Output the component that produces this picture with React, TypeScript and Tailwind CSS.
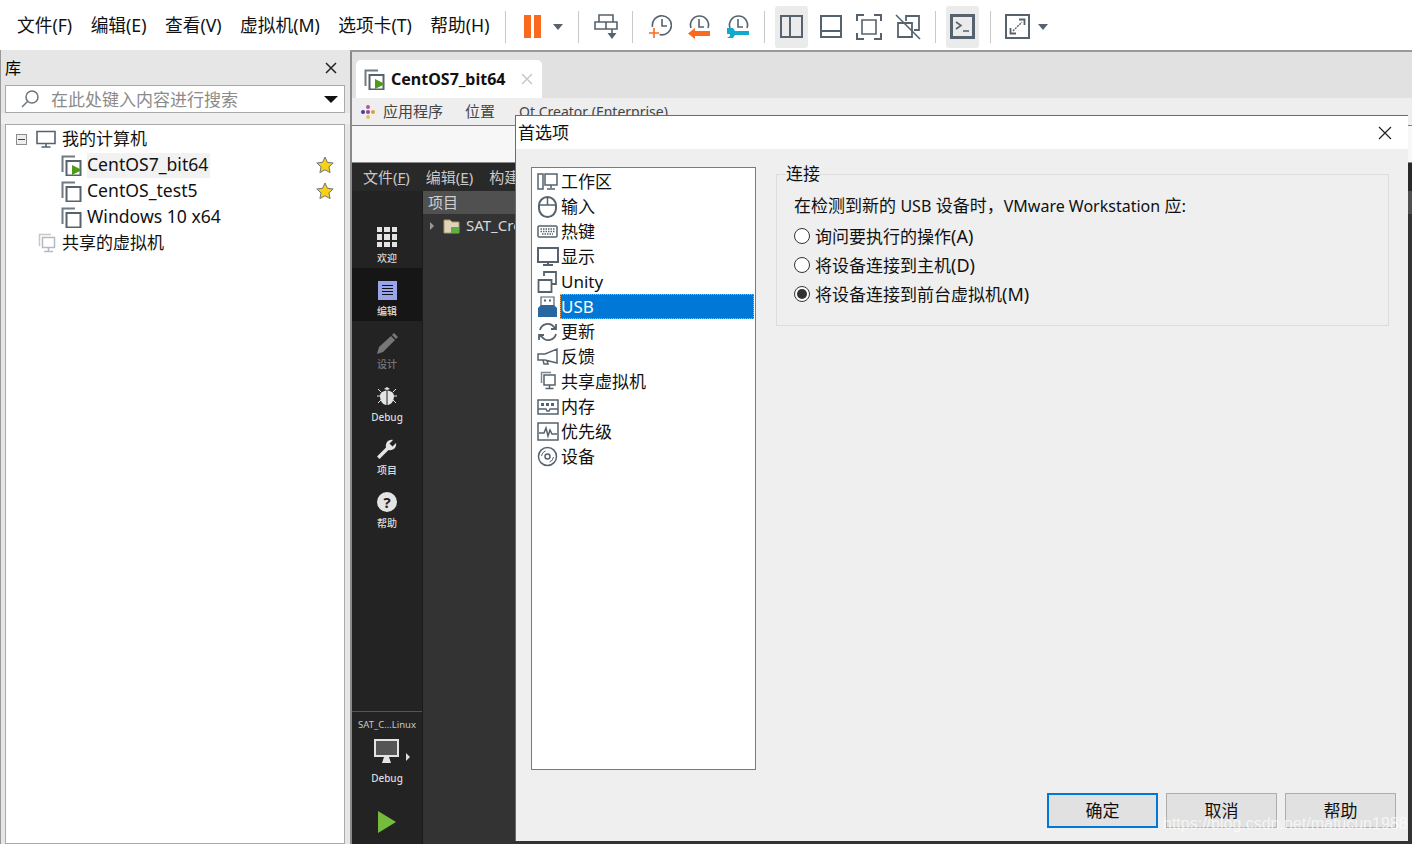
import type { ReactNode } from "react";

const Svg = ({ w, h, children, className }: { w: number; h: number; children: ReactNode; className?: string }) => (
  <svg
    width={w}
    height={h}
    viewBox={`0 0 ${w} ${h}`}
    fill="none"
    stroke="#56636f"
    strokeWidth="2"
    className={"shrink-0 " + (className ?? "")}
  >
    {children}
  </svg>
);

const Sep = () => <div className="w-px h-[32px] bg-[#c9c9c9] shrink-0" />;

const Caret = () => <div className="w-0 h-0 border-x-[5px] border-x-transparent border-t-[6px] border-t-[#56636f] shrink-0" />;

const VmIcon = ({ play }: { play?: boolean }) => (
  <Svg w={21} h={21} className="mr-[5px]">
    <path d="M14 1.5H1.5V17" stroke="#6f7a84" strokeWidth="2" />
    <path d="M5.5 6h14v14.5h-14z" strokeWidth="2" />
    {play && <path d="M11 10l10 5-10 5z" fill="#4f9a1a" stroke="none" />}
  </Svg>
);

const Star = () => (
  <Svg w={18} h={18} className="ml-auto mr-[10px]">
    <path d="M9 1l2.4 5.3 5.8.7-4.3 3.9 1.2 5.7L9 13.8l-5.1 2.8 1.2-5.7L.8 7l5.8-.7z" fill="#f7d117" stroke="#6f7373" strokeWidth="1" />
  </Svg>
);

const SharedIcon = () => (
  <Svg w={18} h={20}>
    <path d="M13 1.5H1.5V13" stroke="#c3c8cc" strokeWidth="1.5" />
    <path d="M4.5 4.5h12v10h-12zM10.5 15v3M6 18.5h9" stroke="#b4babf" strokeWidth="1.5" />
  </Svg>
);

const menus = ["文件(F)", "编辑(E)", "查看(V)", "虚拟机(M)", "选项卡(T)", "帮助(H)"];

const Toolbar = () => (
  <div className="h-[50px] bg-white flex items-center shrink-0 pl-[17px] pt-[3px] text-[17.7px] text-[#111]">
    <div className="flex gap-[18.5px] w-[488px] -mt-[3px]">
      {menus.map((m) => (
        <span key={m} className="whitespace-nowrap">{m}</span>
      ))}
    </div>
    <Sep />
    <div className="flex ml-[18px] w-[17px] h-[23px]">
      <div className="w-[7px] bg-[#f96a1e]" />
      <div className="w-[7px] ml-auto bg-[#f96a1e]" />
    </div>
    <div className="ml-[12px] mr-[15px]"><Caret /></div>
    <Sep />
    <Svg w={24} h={26} className="ml-[15px] mr-[14px]">
      <path d="M5 1h14v7H5zM1 8h22v7H1zM12 8v7M18 15v9" strokeWidth="1.6" />
      <path d="M13.5 19h9L18 25z" fill="#56636f" stroke="none" />
    </Svg>
    <Sep />
    <Svg w={24} h={24} className="ml-[15px] mr-[15px]">
      <path d="M4.500 12a9.500 9.500 0 1 1 7 7.500" strokeWidth="1.6" />
      <path d="M14 4v7h5" strokeWidth="1.6" />
      <path d="M6 13v10M1 18h10" stroke="#f96a1e" strokeWidth="1.6" />
    </Svg>
    <Svg w={24} h={24} className="mr-[15px]">
      <path d="M4 13a9 9 0 1 1 17 0" strokeWidth="1.6" />
      <path d="M12 4v8h5" strokeWidth="1.6" />
      <path d="M8 13v3h15v5H8v3l-7-5.500z" fill="#f96a1e" stroke="none" />
    </Svg>
    <Svg w={24} h={24} className="mr-[14px]">
      <path d="M4 13a9 9 0 1 1 17 0" strokeWidth="1.6" />
      <path d="M12 4v8h5" strokeWidth="1.6" />
      <path d="M1 13h6l2 3h14v4H9l-2 3H1l3-2v-2H1z" fill="#12a9cf" stroke="none" />
    </Svg>
    <Sep />
    <div className="w-[33px] h-[42px] ml-[10px] rounded-[3px] bg-[#ebebeb] flex items-center justify-center">
      <Svg w={23} h={23}><path d="M1 1h21v21H1zM10 1v21" /></Svg>
    </div>
    <Svg w={22} h={23} className="ml-[12px]"><path d="M1 1h20v21H1zM1 16h20" /></Svg>
    <Svg w={26} h={26} className="ml-[14px]">
      <path d="M1 7V1h7M18 1h7v6M25 19v6h-7M8 25H1v-6" />
      <path d="M6 6h14v14H6z" strokeWidth="1.6" />
    </Svg>
    <Svg w={26} h={26} className="ml-[13px]">
      <path d="M11 7V2h13v14h-5M3 9h14v14H3z" strokeWidth="1.8" />
      <path d="M1 1l24 24" strokeWidth="1.6" />
    </Svg>
    <div className="ml-[14px]"><Sep /></div>
    <div className="w-[33px] h-[42px] ml-[10px] rounded-[3px] bg-[#ebebeb] flex items-center justify-center">
      <Svg w={25} h={25}>
        <path d="M1.500 1.500h22v22h-22z" strokeWidth="3" />
        <path d="M6 8l5 3.500-5 3.500M13 17h6" strokeWidth="1.6" />
      </Svg>
    </div>
    <div className="ml-[11px]"><Sep /></div>
    <Svg w={25} h={25} className="ml-[14px] mr-[8px]">
      <path d="M1 1h23v23H1z" strokeWidth="2" />
      <path d="M8 17l9-9" strokeWidth="1.4" strokeDasharray="2 1" />
      <path d="M14 5.500h5.500V11M5.500 14v5.500H11" strokeWidth="1.8" />
    </Svg>
    <Caret />
  </div>
);

const treeChildren = [
  { name: "CentOS7_bit64", play: true, star: true },
  { name: "CentOS_test5", star: true },
  { name: "Windows 10 x64" },
];

const Library = () => (
  <div className="w-[350px] shrink-0 flex flex-col bg-[#e6e6e6] border-l border-l-[#999]">
    <div className="h-[35px] shrink-0 flex items-center justify-between pl-[4px] pr-[13px] text-[16px]">
      <span>库</span>
      <svg width="12" height="12" viewBox="0 0 12 12" stroke="#222" strokeWidth="1.5"><path d="M1 1l10 10M11 1L1 11" /></svg>
    </div>
    <div className="ml-[4px] w-[340px] h-[28px] shrink-0 bg-white border border-[#a9a9a9] flex items-center pl-[14px] pr-[6px]">
      <svg width="20" height="20" viewBox="0 0 20 20" fill="none" stroke="#6b747c" strokeWidth="1.5" className="mr-[11px]">
        <circle cx="12" cy="8" r="6" />
        <path d="M7.5 12.5L2 18" />
      </svg>
      <span className="text-[#8b8b8b] text-[17px] pt-[1px]">在此处键入内容进行搜索</span>
      <div className="ml-auto w-0 h-0 border-x-[7px] border-x-transparent border-t-[7px] border-t-[#111]" />
    </div>
    <div className="h-[11px] shrink-0 bg-[#efefef]" />
    <div className="ml-[4px] w-[340px] flex-1 bg-white border border-[#a9a9a9] text-[17px] text-[#111] pt-[1px]">
      <div className="h-[26px] flex items-center pl-[10px]">
        <div className="w-[11px] h-[11px] border border-[#8d8d8d] bg-[#eee] flex items-center justify-center mr-[9px]">
          <div className="w-[7px] h-px bg-[#24408e]" />
        </div>
        <Svg w={20} h={18} className="mr-[6px]">
          <path d="M1 1.5h18v12H1zM10 14v3M5.5 17h9" strokeWidth="1.6" />
        </Svg>
        <span>我的计算机</span>
      </div>
      {treeChildren.map((c) => (
        <div key={c.name} className="h-[26px] flex items-center pl-[55px]">
          <VmIcon play={c.play} />
          <span className={"h-[25px] leading-[23px] pr-[2px] text-[17.6px] " + (c.play ? "bg-[#f2f2f2]" : "")}>{c.name}</span>
          {c.star && <Star />}
        </div>
      ))}
      <div className="h-[26px] flex items-center pl-[32px]">
        <SharedIcon />
        <span className="ml-[6px]">共享的虚拟机</span>
      </div>
    </div>
  </div>
);

const Grid3 = () => (
  <div className="grid grid-cols-3 gap-[2px] w-[20px] h-[20px]">
    {Array.from({ length: 9 }).map((_, i) => (
      <div key={i} className="bg-[#e4e4e4]" />
    ))}
  </div>
);

const RailItem = ({ label, icon, active, dim }: { label: string; icon: ReactNode; active?: boolean; dim?: boolean }) => (
  <div className={"h-[53px] flex flex-col items-center justify-end pb-[3px] " + (active ? "bg-[#161616]" : "")}>
    <div className="h-[28px] flex items-center justify-center">{icon}</div>
    <span className={"text-[10px] leading-[14px] font-medium " + (dim ? "text-[#777]" : "text-[#dcdcdc]")}>{label}</span>
  </div>
);

const Rail = () => (
  <div className="w-[71px] shrink-0 bg-[#232323] flex flex-col border-r border-r-[#1a1a1a]">
    <div className="h-[24px] shrink-0" />
    <RailItem label="欢迎" icon={<Grid3 />} />
    <RailItem
      label="编辑"
      active
      icon={
        <div className="w-[19px] h-[19px] bg-[#9aa4e8] flex flex-col justify-center items-center gap-[2px]">
          <div className="w-[11px] h-px bg-[#111]" />
          <div className="w-[11px] h-px bg-[#111]" />
          <div className="w-[11px] h-px bg-[#111]" />
          <div className="w-[11px] h-px bg-[#111]" />
        </div>
      }
    />
    <RailItem
      label="设计"
      dim
      icon={
        <svg width="21" height="21" viewBox="0 0 21 21" fill="#777">
          <path d="M0 21l2-7L14 3l4 4L6 19zM15 2l2-2 4 4-2 2z" />
        </svg>
      }
    />
    <RailItem
      label="Debug"
      icon={
        <svg width="20" height="20" viewBox="0 0 20 20" fill="#e4e4e4">
          <path d="M9.5 4.5V19C6 19 3 15 3 10c0-3 2.500-5 6.500-5.500zM10.500 4.500V19c3.500 0 6.500-4 6.500-9 0-3-2.500-5-6.500-5.500zM7 3l3-2 3 2-3 1z" />
          <path d="M0 10h3M17 10h3M1 3l3 3M19 3l-3 3M1 17l3-3M19 17l-3-3" stroke="#e4e4e4" strokeWidth="1" />
        </svg>
      }
    />
    <RailItem
      label="项目"
      icon={
        <svg width="20" height="20" viewBox="0 0 20 20" fill="#e4e4e4">
          <path d="M0 17.5L9 8.5C8 4 11.5 0 16 1l-3.500 3.500 3 3L19 4c1 4.500-3 8-7.500 7L2.500 20z" />
        </svg>
      }
    />
    <RailItem
      label="帮助"
      icon={
        <div className="w-[20px] h-[20px] rounded-full bg-[#e4e4e4] text-[#232323] text-[15px] font-bold leading-[20px] text-center">?</div>
      }
    />
    <div className="flex-1" />
    <div className="h-[133px] shrink-0 border-t border-t-[#555] flex flex-col items-center pt-[6px]">
      <span className="text-[9.5px] leading-[14px] text-[#c8c8c8] whitespace-nowrap">SAT_C...Linux</span>
      <div className="mt-[7px] flex items-end ml-[10px]">
        <svg width="25" height="25" viewBox="0 0 25 25">
          <path d="M1 1h23v16H1z" fill="#555" stroke="#e4e4e4" strokeWidth="2" />
          <path d="M10 18h5l2 6H8z" fill="#e4e4e4" />
        </svg>
        <div className="ml-[7px] mb-[3px] w-0 h-0 border-y-[4px] border-y-transparent border-l-[4px] border-l-[#ddd]" />
      </div>
      <span className="text-[10px] leading-[14px] font-medium text-[#dcdcdc] mt-[7px]">Debug</span>
      <svg width="18" height="22" viewBox="0 0 18 22" className="mt-[26px]"><path d="M0 0l18 11L0 22z" fill="#76bc3c" /></svg>
    </div>
  </div>
);

const GuestArea = () => (
  <div className="flex-1 flex flex-col min-w-0 border-l-2 border-l-[#8a8a8a] border-t-2 border-t-[#999] bg-[#e1e1e1]">
    <div className="h-[46px] shrink-0 flex items-end pl-[4px]">
      <div className="w-[186px] h-[38px] bg-white rounded-t-[5px] flex items-center pl-[8px] pr-[9px] text-[16px] font-bold text-[#111]">
        <VmIcon play />
        <span className="ml-[1px]">CentOS7_bit64</span>
        <svg width="12" height="12" viewBox="0 0 12 12" stroke="#c8c8c8" strokeWidth="1.5" className="ml-auto"><path d="M1 1l10 10M11 1L1 11" /></svg>
      </div>
    </div>
    <div className="h-[28px] shrink-0 bg-[#eeeeee] border-b border-b-[#7f7f7f] flex items-center pl-[8px] text-[15px] text-[#444]">
      <svg width="16" height="16" viewBox="0 0 16 16" className="mr-[7px]">
        <circle cx="8" cy="3" r="2" fill="#b5539c" />
        <circle cx="13" cy="8" r="2" fill="#d9a23a" />
        <circle cx="3" cy="8" r="2" fill="#3f3f99" />
        <circle cx="8" cy="13" r="2" fill="#e8c35c" />
        <circle cx="8" cy="8" r="2" fill="#8a4f8f" />
      </svg>
      <span>应用程序</span>
      <span className="ml-[22px]">位置</span>
      <span className="ml-[24px] whitespace-nowrap text-[14px]">Qt Creator (Enterprise)</span>
    </div>
    <div className="h-[37px] shrink-0 bg-[#f7f7f7] border-b border-b-[#8a8a8a]" />
    <div className="flex-1 flex flex-col min-h-0">
      <div className="h-[28px] shrink-0 bg-[#292929] flex items-center pl-[11px] gap-[16px] text-[15px] text-[#c8c8c8] whitespace-nowrap">
        <span>文件(<span className="underline">F</span>)</span>
        <span>编辑(<span className="underline">E</span>)</span>
        <span>构建(<span className="underline">B</span>)</span>
      </div>
      <div className="flex-1 flex min-h-0">
        <Rail />
        <div className="flex-1 bg-[#333333]">
          <div className="h-[23px] bg-[#505050] flex items-center pl-[5px] text-[15px] text-[#d0d0d0]">项目</div>
          <div className="h-[23px] flex items-center pl-[7px] text-[15px] text-[#d8d8d8]">
            <div className="w-0 h-0 border-y-[4px] border-y-transparent border-l-[4px] border-l-[#999]" />
            <svg width="17" height="16" viewBox="0 0 17 16" className="ml-[9px] mr-[6px]">
              <path d="M1 2h6l2 2h7v11H1z" fill="#e0d4b8" stroke="#a8976f" />
              <rect x="8" y="9" width="8" height="6" fill="#5fb043" />
            </svg>
            <span>SAT_Creator</span>
          </div>
        </div>
      </div>
    </div>
  </div>
);

const c = { stroke: "#56636f", strokeWidth: 1.5 };

const prefs: { label: string; icon: ReactNode; selected?: boolean }[] = [
  { label: "工作区", icon: <path d="M1 3h5v15H1zM8 3h12v11H8zM14 14v3M10 18h8" {...c} /> },
  { label: "输入", icon: <><rect x="2" y="1" width="17" height="20" rx="8.5" {...c} strokeWidth={2} /><path d="M2 9h17M10.5 2v7" {...c} /></> },
  { label: "热键", icon: <><rect x="1" y="5" width="19" height="11" rx="1" {...c} /><path d="M3.5 8h14M3.5 10.5h14M5 13h11" stroke="#56636f" strokeWidth="1.5" strokeDasharray="1.5 1" /></> },
  { label: "显示", icon: <path d="M1 2h20v14H1zM11 16v2M6 19h10" {...c} strokeWidth={2} /> },
  { label: "Unity", icon: <path d="M1.5 9h13v12h-13zM7 5V1h12v12h-4" {...c} strokeWidth={1.8} /> },
  { label: "USB", selected: true, icon: <><path d="M4 1h13v9H4z" {...c} strokeWidth={1.2} /><path d="M7 3.5h2v2H7zM12 3.5h2v2h-2z" fill="#56636f" stroke="none" /><path d="M4 9h13l3 3v9H1v-9z" fill="#28689f" stroke="none" /></> },
  { label: "更新", icon: <path d="M3 9a8 8 0 0 1 14-3l2 2M19 13a8 8 0 0 1-14 3l-3-2M19 3v5h-5M2 19v-5h5" {...c} strokeWidth={1.8} /> },
  { label: "反馈", icon: <path d="M20 3v14L8 14H1V8h7zM6 14l1 4h4l-1-3" {...c} /> },
  { label: "共享虚拟机", icon: <g transform="translate(3 0)"><path d="M11 1.5H1.5V12" stroke="#7d8790" strokeWidth="1.5" /><path d="M4 4h11v10H4zM9.5 14v3M5.5 17.5h8" {...c} /></g> },
  { label: "内存", icon: <><path d="M1 4h20v14H1zM1 13h8l1 2h2l1-2h8" {...c} /><path d="M4 7h3v3H4zM9 7h3v3H9zM14 7h3v3h-3z" fill="#56636f" stroke="none" /></> },
  { label: "优先级", icon: <><path d="M1 2h20v17H1z" {...c} /><path d="M2 12h5l2-5 2 8 2-6 2 4h5" {...c} /></> },
  { label: "设备", icon: <><circle cx="10.5" cy="10.5" r="9" {...c} /><circle cx="10.5" cy="10.5" r="2.5" {...c} /><path d="M4.5 10a6 6 0 0 1 4-5M16.5 11a6 6 0 0 1-4 5" {...c} strokeWidth={1} /></> },
];

const radios = [
  { label: "询问要执行的操作", key: "(A)" },
  { label: "将设备连接到主机", key: "(D)" },
  { label: "将设备连接到前台虚拟机", key: "(M)", checked: true },
];

const buttons = ["确定", "取消", "帮助"];

const Dialog = () => (
  <div className="absolute left-[515px] top-[115px] w-[893px] h-[726px] flex flex-col bg-[#efefef] border border-[#6b6b6b] border-b-0 border-r-0 text-[17px] text-[#111]">
    <div className="h-[33px] shrink-0 bg-white flex items-center justify-between pl-[2px] pr-[16px]">
      <span>首选项</span>
      <svg width="14" height="14" viewBox="0 0 14 14" stroke="#222" strokeWidth="1.2"><path d="M1 1l12 12M13 1L1 13" /></svg>
    </div>
    <div className="flex-1 min-h-0 flex flex-col pt-[18px] pb-[13px] pl-[15px] pr-[12px]">
      <div className="flex-1 min-h-0 flex gap-[20px] pr-[7px]">
        <div className="w-[225px] shrink-0 bg-white border border-[#7a7a7a] pt-[1px] pl-[5px] pr-[1px]">
          {prefs.map((p) => (
            <div key={p.label} className="h-[25px] flex items-center">
              <Svg w={22} h={22} className="mr-[1px]">{p.icon}</Svg>
              <span
                className={
                  "flex-1 h-[25px] leading-[25px] pl-[1px] " +
                  (p.selected ? "bg-[#0078d7] text-white outline-1 outline-dotted outline-[#f3a35c] -outline-offset-1" : "")
                }
              >
                {p.label}
              </span>
            </div>
          ))}
        </div>
        <fieldset className="flex-1 h-[162px] -mt-[3px] border border-[#dcdcdc] pl-[17px]">
          <legend className="-ml-[8px] leading-[20px]">连接</legend>
          <p className="mt-[10px] h-[24px] leading-[24px] whitespace-nowrap">
            在检测到新的 <span className="text-[16px]">USB</span> 设备时，<span className="text-[16px]">VMware Workstation</span> 应:
          </p>
          <div className="mt-[6px] flex flex-col gap-[5px]">
            {radios.map((r) => (
              <label key={r.key} className="h-[24px] flex items-center gap-[5px]">
                <span className="w-[16px] h-[16px] rounded-full border border-[#333] bg-white flex items-center justify-center">
                  {r.checked && <span className="w-[10px] h-[10px] rounded-full bg-[#333]" />}
                </span>
                <span>
                  {r.label}
                  <span className="text-[18px]">{r.key}</span>
                </span>
              </label>
            ))}
          </div>
        </fieldset>
      </div>
      <div className="h-[35px] mt-[23px] shrink-0 flex justify-end gap-[8px]">
        {buttons.map((b, i) => (
          <div
            key={b}
            className={
              "w-[111px] bg-[#e1e1e1] flex items-center justify-center " +
              (i === 0 ? "border-2 border-[#0078d7]" : "border border-[#adadad]")
            }
          >
            {b}
          </div>
        ))}
      </div>
    </div>
  </div>
);

export default function App() {
  return (
    <div className="relative w-[1412px] h-[844px] overflow-hidden flex flex-col bg-[#e6e6e6] font-['Noto_Sans','Noto_Sans_CJK_SC',sans-serif]">
      <Toolbar />
      <div className="flex-1 flex min-h-0">
        <Library />
        <GuestArea />
      </div>
      <Dialog />
      <div className="absolute left-[1163px] top-[814px] text-[16px] leading-[20px] text-white/70 whitespace-nowrap font-['Liberation_Sans',sans-serif]">
        https://blog.csdn.net/mafucun1988
      </div>
    </div>
  );
}
